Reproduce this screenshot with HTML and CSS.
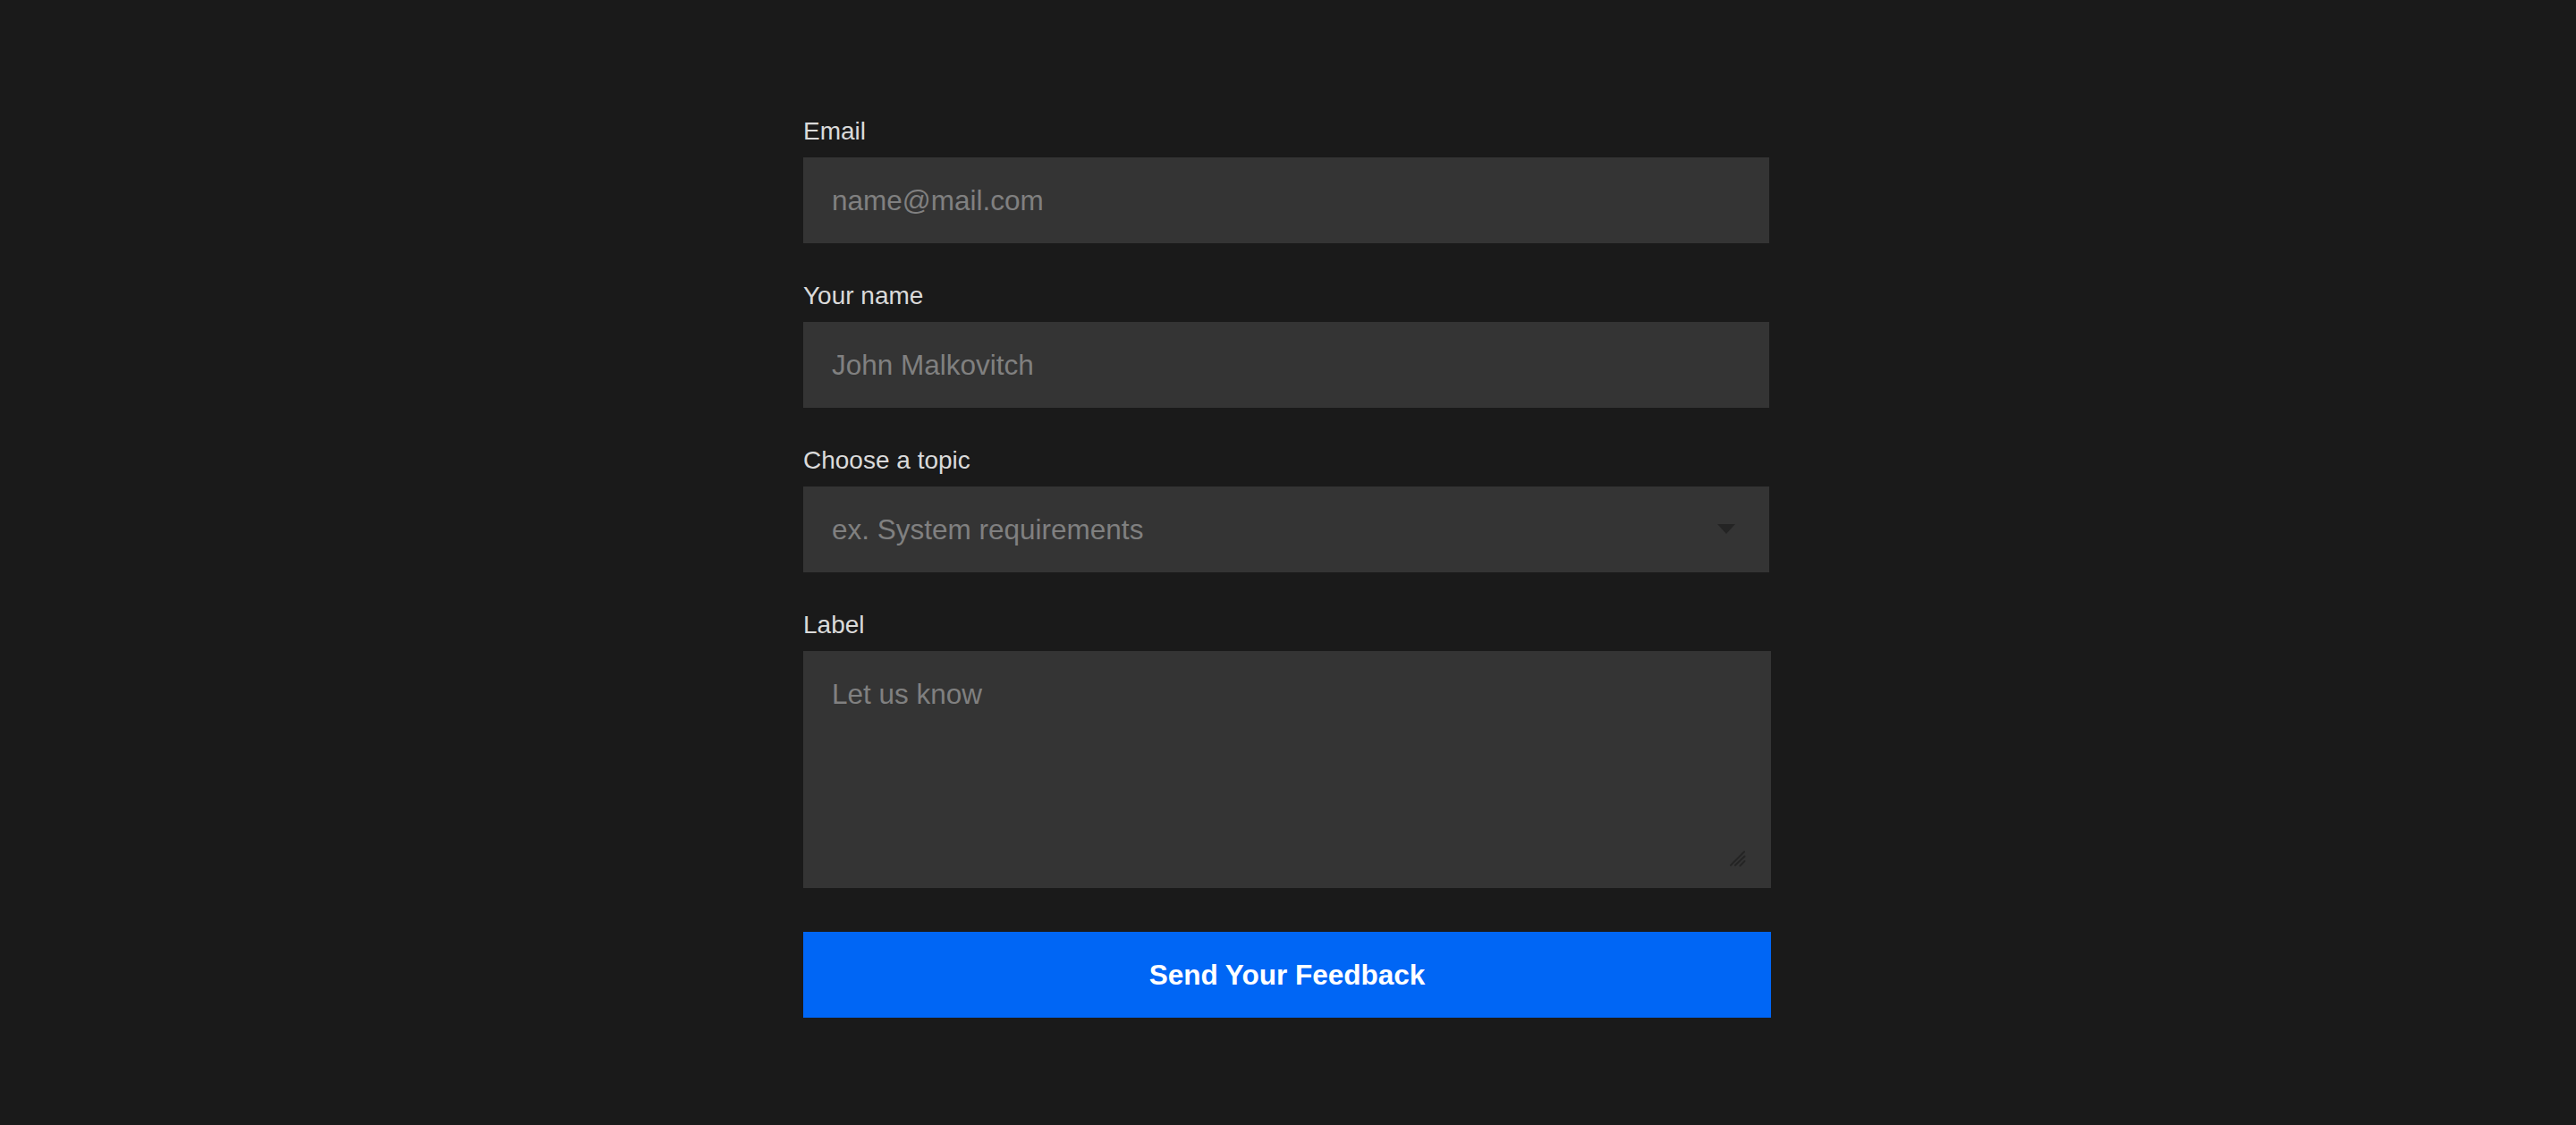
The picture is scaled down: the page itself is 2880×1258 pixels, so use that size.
FILE: index.html
```html
<!DOCTYPE html>
<html lang="en">
<head>
<meta charset="utf-8">
<title>Feedback</title>
<link rel="stylesheet" href="styles.css">
</head>
<body>
<main class="page">
  <form class="feedback">
    <div class="field">
      <label class="label" for="email">Email</label>
      <input class="control" id="email" type="email" placeholder="name@mail.com">
    </div>
    <div class="field">
      <label class="label" for="name">Your name</label>
      <input class="control" id="name" type="text" placeholder="John Malkovitch">
    </div>
    <div class="field">
      <label class="label" for="topic">Choose a topic</label>
      <div class="select-wrap">
        <select class="control select" id="topic">
          <option>ex. System requirements</option>
        </select>
        <span class="caret"></span>
      </div>
    </div>
    <div class="field">
      <label class="label" for="msg">Label</label>
      <div class="area-wrap">
        <textarea class="area" id="msg" placeholder="Let us know"></textarea>
        <svg class="grip" width="18" height="18" viewBox="0 0 18 18">
          <path d="M1 16.5 L16 1.5 M6 16.5 L16.5 6.5 M11.5 17 L16.5 12" stroke="#242424" stroke-width="2" fill="none" stroke-linecap="round"/>
        </svg>
      </div>
    </div>
    <button class="submit" type="button">Send Your Feedback</button>
  </form>
</main>
</body>
</html>
```

FILE: styles.css
```css
html, body {
  margin: 0;
  padding: 0;
  background: #1a1a1a;
}
body {
  font-family: "Liberation Sans", Arial, Helvetica, sans-serif;
  min-height: 1258px;
}
.page {
  display: flex;
  justify-content: center;
  padding-top: 130px;
  padding-right: 2px;
}
.feedback {
  width: 1082px;
  display: flex;
  flex-direction: column;
}
.field {
  display: flex;
  flex-direction: column;
  margin-bottom: 42px;
}
.label {
  font-size: 28px;
  line-height: 34px;
  color: #dadada;
  margin-bottom: 12px;
}
.control {
  box-sizing: border-box;
  width: 1080px;
  height: 96px;
  border: none;
  outline: none;
  background: #343434;
  color: #808080;
  font-family: inherit;
  font-size: 31.5px;
  padding: 0 32px;
  margin: 0;
  border-radius: 0;
}
.control::placeholder {
  color: #808080;
}
.select-wrap {
  position: relative;
  width: 1080px;
}
.select {
  appearance: none;
  -webkit-appearance: none;
  display: block;
}
.caret {
  position: absolute;
  right: 38px;
  top: 42px;
  width: 0;
  height: 0;
  border-left: 10px solid transparent;
  border-right: 10px solid transparent;
  border-top: 11px solid #242424;
}
.area-wrap {
  position: relative;
  width: 1082px;
  height: 265px;
}
.area {
  box-sizing: border-box;
  display: block;
  width: 1082px;
  height: 265px;
  border: none;
  outline: none;
  background: #343434;
  color: #808080;
  font-family: inherit;
  font-size: 31.5px;
  padding: 30px 32px;
  margin: 0;
  resize: none;
  border-radius: 0;
}
.area::placeholder {
  color: #808080;
}
.grip {
  position: absolute;
  right: 28px;
  bottom: 24px;
}
.submit {
  margin-top: 7px;
  width: 1082px;
  height: 96px;
  border: none;
  background: #0066f5;
  color: #ffffff;
  font-family: inherit;
  font-size: 31.5px;
  font-weight: 700;
  cursor: pointer;
  border-radius: 0;
  padding: 0;
}
```
